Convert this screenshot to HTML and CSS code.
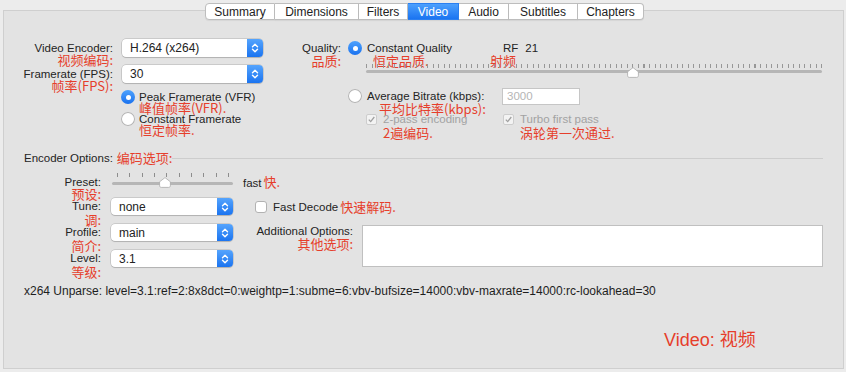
FILE: index.html
```html
<!DOCTYPE html>
<html lang="zh">
<head>
    <meta charset="UTF-8">
    <title>Video</title>
    <link rel="stylesheet" href="styles.css">
</head>
<body>
    <div class="tabs">
        <button class="tab">Summary</button>
        <button class="tab">Dimensions</button>
        <button class="tab">Filters</button>
        <button class="tab active">Video</button>
        <button class="tab">Audio</button>
        <button class="tab">Subtitles</button>
        <button class="tab">Chapters</button>
    </div>

    <div class="panel">
        <div class="top">
            <div class="left-col">
                <div class="field">
                    <div class="label"><span class="en">Video Encoder:</span><span class="cn">视频编码:</span></div>
                    <div class="select">H.264 (x264)<span class="arrow"><svg width="8" height="12" viewBox="0 0 8 12"><path d="M1.5 4.8L4 2.3l2.5 2.5M1.5 7.2L4 9.7l2.5-2.5" fill="none" stroke="#fff" stroke-width="1.4" stroke-linecap="round" stroke-linejoin="round"/></svg></span></div>
                </div>
                <div class="field">
                    <div class="label"><span class="en">Framerate (FPS):</span><span class="cn">帧率(FPS):</span></div>
                    <div class="select">30<span class="arrow"><svg width="8" height="12" viewBox="0 0 8 12"><path d="M1.5 4.8L4 2.3l2.5 2.5M1.5 7.2L4 9.7l2.5-2.5" fill="none" stroke="#fff" stroke-width="1.4" stroke-linecap="round" stroke-linejoin="round"/></svg></span></div>
                </div>
                <div class="radios">
                    <div class="radio-item">
                        <span class="radio on"></span>
                        <div><span class="en">Peak Framerate (VFR)</span><span class="cn">峰值帧率(VFR).</span></div>
                    </div>
                    <div class="radio-item">
                        <span class="radio"></span>
                        <div><span class="en">Constant Framerate</span><span class="cn">恒定帧率.</span></div>
                    </div>
                </div>
            </div>

            <div class="right-col">
                <div class="q-row">
                    <span class="q-label">Quality:</span>
                    <span class="radio on"></span>
                    <span class="q-text">Constant Quality</span>
                    <span>RF</span>
                    <span class="rf-val">21</span>
                </div>
                <div class="q-cn">
                    <span class="q-label cn">品质:</span>
                    <span class="cn q-cn-text">恒定品质.</span>
                    <span class="cn">射频</span>
                </div>
                <div class="slider quality">
                    <div class="ticks"></div>
                    <div class="track"></div>
                    <svg class="thumb" width="12" height="11" viewBox="0 0 12 11"><path d="M6 .6l5.4 4.2v3.9c0 1-.8 1.7-1.7 1.7H2.3c-1 0-1.7-.7-1.7-1.7V4.8z" fill="#fff" stroke="#a9a9a9" stroke-width=".8"/></svg>
                </div>
                <div class="q-row avg">
                    <span class="q-label"></span>
                    <span class="radio"></span>
                    <span class="q-text">Average Bitrate (kbps):</span>
                    <input class="bitrate" type="text" value="3000" disabled>
                </div>
                <div class="cn avg-cn">平均比特率(kbps):</div>
                <div class="checks">
                    <span class="check-item"><span class="checkbox"><svg width="9" height="9" viewBox="0 0 9 9"><path d="M1.8 4.6l1.9 2 3.6-4.6" fill="none" stroke="#a0a0a0" stroke-width="1.3"/></svg></span>2-pass encoding</span>
                    <span class="check-item"><span class="checkbox"><svg width="9" height="9" viewBox="0 0 9 9"><path d="M1.8 4.6l1.9 2 3.6-4.6" fill="none" stroke="#a0a0a0" stroke-width="1.3"/></svg></span>Turbo first pass</span>
                </div>
                <div class="checks-cn">
                    <span class="cn">2遍编码.</span>
                    <span class="cn">涡轮第一次通过.</span>
                </div>
            </div>
        </div>

        <div class="enc-head">
            <span>Encoder Options:</span><span class="cn">编码选项:</span>
            <div class="rule"></div>
        </div>

        <div class="enc">
            <div class="label preset-label"><span class="en">Preset:</span><span class="cn">预设:</span></div>
            <div class="slider preset">
                <div class="ticks"></div>
                <div class="track"></div>
                <svg class="thumb" width="12" height="11" viewBox="0 0 12 11"><path d="M6 .6l5.4 4.2v3.9c0 1-.8 1.7-1.7 1.7H2.3c-1 0-1.7-.7-1.7-1.7V4.8z" fill="#fff" stroke="#a9a9a9" stroke-width=".8"/></svg>
            </div>
            <div class="preset-val">fast<span class="cn">快.</span></div>

            <div class="label"><span class="en">Tune:</span><span class="cn">调:</span></div>
            <div class="select">none<span class="arrow"><svg width="8" height="12" viewBox="0 0 8 12"><path d="M1.5 4.8L4 2.3l2.5 2.5M1.5 7.2L4 9.7l2.5-2.5" fill="none" stroke="#fff" stroke-width="1.4" stroke-linecap="round" stroke-linejoin="round"/></svg></span></div>
            <div class="fast-decode"><span class="checkbox white"></span>Fast Decode<span class="cn">快速解码.</span></div>

            <div class="label"><span class="en">Profile:</span><span class="cn">简介:</span></div>
            <div class="select">main<span class="arrow"><svg width="8" height="12" viewBox="0 0 8 12"><path d="M1.5 4.8L4 2.3l2.5 2.5M1.5 7.2L4 9.7l2.5-2.5" fill="none" stroke="#fff" stroke-width="1.4" stroke-linecap="round" stroke-linejoin="round"/></svg></span></div>
            <div class="addl">
                <div class="label"><span class="en">Additional Options:</span><span class="cn">其他选项:</span></div>
                <textarea class="options"></textarea>
            </div>

            <div class="label"><span class="en">Level:</span><span class="cn">等级:</span></div>
            <div class="select">3.1<span class="arrow"><svg width="8" height="12" viewBox="0 0 8 12"><path d="M1.5 4.8L4 2.3l2.5 2.5M1.5 7.2L4 9.7l2.5-2.5" fill="none" stroke="#fff" stroke-width="1.4" stroke-linecap="round" stroke-linejoin="round"/></svg></span></div>
        </div>

        <div class="unparse">x264 Unparse: level=3.1:ref=2:8x8dct=0:weightp=1:subme=6:vbv-bufsize=14000:vbv-maxrate=14000:rc-lookahead=30</div>
        <div class="caption">Video: <span class="caption-cn">视频</span></div>
    </div>
</body>
</html>
```
FILE: styles.css
```css
* {
    box-sizing: border-box;
}
body {
    margin: 0;
    height: 372px;
    overflow: hidden;
    background-color: #ececec;
    font-family: "Liberation Sans", Arial, sans-serif;
    font-size: 11.5px;
    color: #242424;
}
.cn {
    color: #e63e2b;
    font-family: "Noto Sans CJK SC", sans-serif;
    font-size: 13px;
    line-height: 12px;
}

/* tab bar */
.tabs {
    position: relative;
    z-index: 1;
    display: flex;
    justify-content: center;
    height: 17px;
    margin: 3px 0 -10px;
    padding-left: 3px;
}
.tab {
    height: 17px;
    padding: 0;
    border: 1px solid #bdbdbd;
    border-left: none;
    background-color: #fff;
    font-family: "Liberation Sans", Arial, sans-serif;
    font-size: 12px;
    color: #222;
    box-shadow: 0 1px 1px rgba(0, 0, 0, 0.06);
}
.tab:first-child {
    border-left: 1px solid #bdbdbd;
    border-radius: 4px 0 0 4px;
}
.tab:last-child {
    border-radius: 0 4px 4px 0;
}
.tab.active {
    background: linear-gradient(#4da0fd, #1a74f1);
    border-color: #2b7ff0;
    color: #fff;
}
.tab:nth-child(1) { width: 70px; }
.tab:nth-child(2) { width: 84px; }
.tab:nth-child(3) { width: 49px; }
.tab:nth-child(4) { width: 51px; }
.tab:nth-child(5) { width: 50px; }
.tab:nth-child(6) { width: 69px; }
.tab:nth-child(7) { width: 66px; }

.panel {
    height: 359px;
    margin: 0 2px 0 3px;
    border: 1px solid #cfcfcf;
    background-color: #e3e3e3;
}

/* shared controls */
.label {
    text-align: right;
}
.label .en,
.label .cn {
    display: block;
}
.select {
    display: flex;
    align-items: center;
    justify-content: space-between;
    height: 18px;
    padding-left: 8px;
    background-color: #fff;
    border-radius: 4px;
    box-shadow: 0 0 0 0.5px rgba(0, 0, 0, 0.22), 0 1px 1px rgba(0, 0, 0, 0.12);
    font-size: 12px;
    color: #222;
}
.arrow {
    display: flex;
    align-items: center;
    justify-content: center;
    width: 16px;
    height: 100%;
    border-radius: 0 4px 4px 0;
    background: linear-gradient(#55a4fd, #1b74f0);
}
.radio {
    flex: none;
    width: 14px;
    height: 14px;
    border-radius: 50%;
    background-color: #fff;
    box-shadow: inset 0 0 0 1px #b3b3b3;
}
.radio.on {
    display: flex;
    align-items: center;
    justify-content: center;
    background: linear-gradient(#4ea2fd, #1a72ef);
    box-shadow: none;
}
.radio.on::after {
    content: "";
    width: 5px;
    height: 5px;
    border-radius: 50%;
    background-color: #fff;
}
.checkbox {
    display: flex;
    align-items: center;
    justify-content: center;
    flex: none;
    width: 11px;
    height: 11px;
    border: 1px solid #cdcdcd;
    border-radius: 2px;
    background-color: #f3f3f3;
}
.checkbox.white {
    width: 12px;
    height: 12px;
    border-color: #b2b2b2;
    border-radius: 3px;
    background-color: #fff;
}
.slider {
    position: relative;
}
.ticks {
    height: 4px;
}
.track {
    height: 3px;
    border-radius: 2px;
    background-color: #b6b6b6;
}
.thumb {
    position: absolute;
    top: 3px;
}

/* top section */
.top {
    display: flex;
    height: 127px;
    padding-top: 28px;
}
.left-col {
    flex: none;
    width: 286px;
}
.field {
    display: grid;
    grid-template-columns: 109px 141px;
    column-gap: 9px;
    height: 26px;
}
.field .en {
    padding-top: 3px;
    line-height: 12px;
}
.field .cn {
    line-height: 11px;
}
.radios {
    margin: -1px 0 0 117px;
}
.radio-item {
    display: flex;
    gap: 4px;
    height: 22px;
}
.radio-item .en,
.radio-item .cn {
    display: block;
}
.radio-item .en {
    line-height: 12px;
    padding-top: 1px;
}
.radio-item .cn {
    line-height: 9px;
}

.right-col {
    flex: 1;
}
.q-row {
    display: flex;
    align-items: center;
    height: 18px;
}
.q-label {
    flex: none;
    width: 51px;
    text-align: right;
}
.q-row .radio {
    margin-left: 7px;
}
.q-text {
    flex: none;
    width: 136px;
    margin-left: 5px;
}
.rf-val {
    margin-left: 7px;
}
.q-cn {
    display: flex;
    height: 9px;
    margin-top: -2px;
}
.q-cn-text {
    width: 117px;
    margin-left: 32px;
}
.slider.quality {
    width: 456px;
    height: 13px;
    margin-left: 76px;
}
.slider.quality .ticks {
    background: repeating-linear-gradient(90deg, #979797 0 1px, transparent 1px 5.55px);
}
.slider.quality .track {
    margin-top: 2px;
}
.slider.quality .thumb {
    left: 261px;
}
.q-row.avg {
    margin-top: 10px;
}
.q-row.avg .q-text {
    width: 135px;
}
.bitrate {
    width: 78px;
    height: 17px;
    padding: 0 0 0 4px;
    border: 1px solid #c6c6c6;
    background-color: #fff;
    font-family: "Liberation Sans", Arial, sans-serif;
    font-size: 11.5px;
    color: #b5b5b5;
}
.avg-cn {
    margin: -1px 0 0 89px;
    line-height: 10px;
}
.checks {
    display: flex;
    height: 11px;
    margin: 0 0 0 76px;
}
.check-item {
    display: flex;
    align-items: center;
    gap: 6px;
    line-height: 11px;
    color: #a2a2a2;
}
.check-item:first-child {
    width: 137px;
}
.checks-cn {
    display: flex;
    margin: 2px 0 0 93px;
}
.checks-cn .cn:first-child {
    width: 137px;
}

/* encoder options */
.enc-head {
    display: flex;
    align-items: center;
    height: 14px;
    margin-top: 13px;
    padding: 0 20px;
}
.enc-head .cn {
    margin-left: 4px;
}
.rule {
    flex: 1;
    height: 1px;
    background-color: #cdcdcd;
}
.enc {
    display: grid;
    grid-template-columns: 97px 122px auto;
    grid-auto-rows: 26px;
    column-gap: 10px;
    margin-top: 7px;
}
.enc .label .en {
    line-height: 17px;
}
.enc .label .cn {
    line-height: 9px;
}
.enc .select {
    height: 17px;
}
.enc .preset-label {
    padding-top: 3px;
}
.enc .preset-label .en {
    line-height: 15px;
}
.enc .preset-label .cn {
    line-height: 8px;
}
.slider.preset {
    width: 121px;
    height: 17px;
    margin-left: 1px;
}
.slider.preset .ticks {
    margin-top: 1px;
    background: repeating-linear-gradient(90deg, #8d8d8d 0 1px, transparent 1px 12.33px);
    background-position: 5px 0;
}
.slider.preset .track {
    margin-top: 5px;
}
.slider.preset .thumb {
    top: 5px;
    left: 47px;
}
.preset-val {
    padding-top: 3px;
    line-height: 17px;
}
.preset-val .cn {
    margin-left: 2px;
}
.fast-decode {
    display: flex;
    align-items: center;
    gap: 6px;
    height: 17px;
    margin-left: 12px;
}
.fast-decode .cn {
    margin-left: -4px;
}
.addl {
    display: flex;
    grid-column: 3;
    grid-row: 3 / span 2;
    margin-left: 11px;
}
.addl .label {
    width: 99px;
}
.enc .addl .label .en {
    line-height: 15px;
}
.enc .addl .label .cn {
    line-height: 10px;
}
.options {
    width: 461px;
    height: 42px;
    margin: 1px 0 0 9px;
    border: 1px solid #c0c0c0;
    background-color: #fff;
    resize: none;
}

.unparse {
    margin-top: 8px;
    padding-left: 20px;
    font-size: 12px;
    line-height: 14px;
    color: #1e1e1e;
}
.caption {
    margin: 30px 0 0 660px;
    font-size: 18px;
    line-height: 20px;
    color: #e63e2b;
}
.caption-cn {
    font-family: "Noto Sans CJK SC", sans-serif;
}
```
